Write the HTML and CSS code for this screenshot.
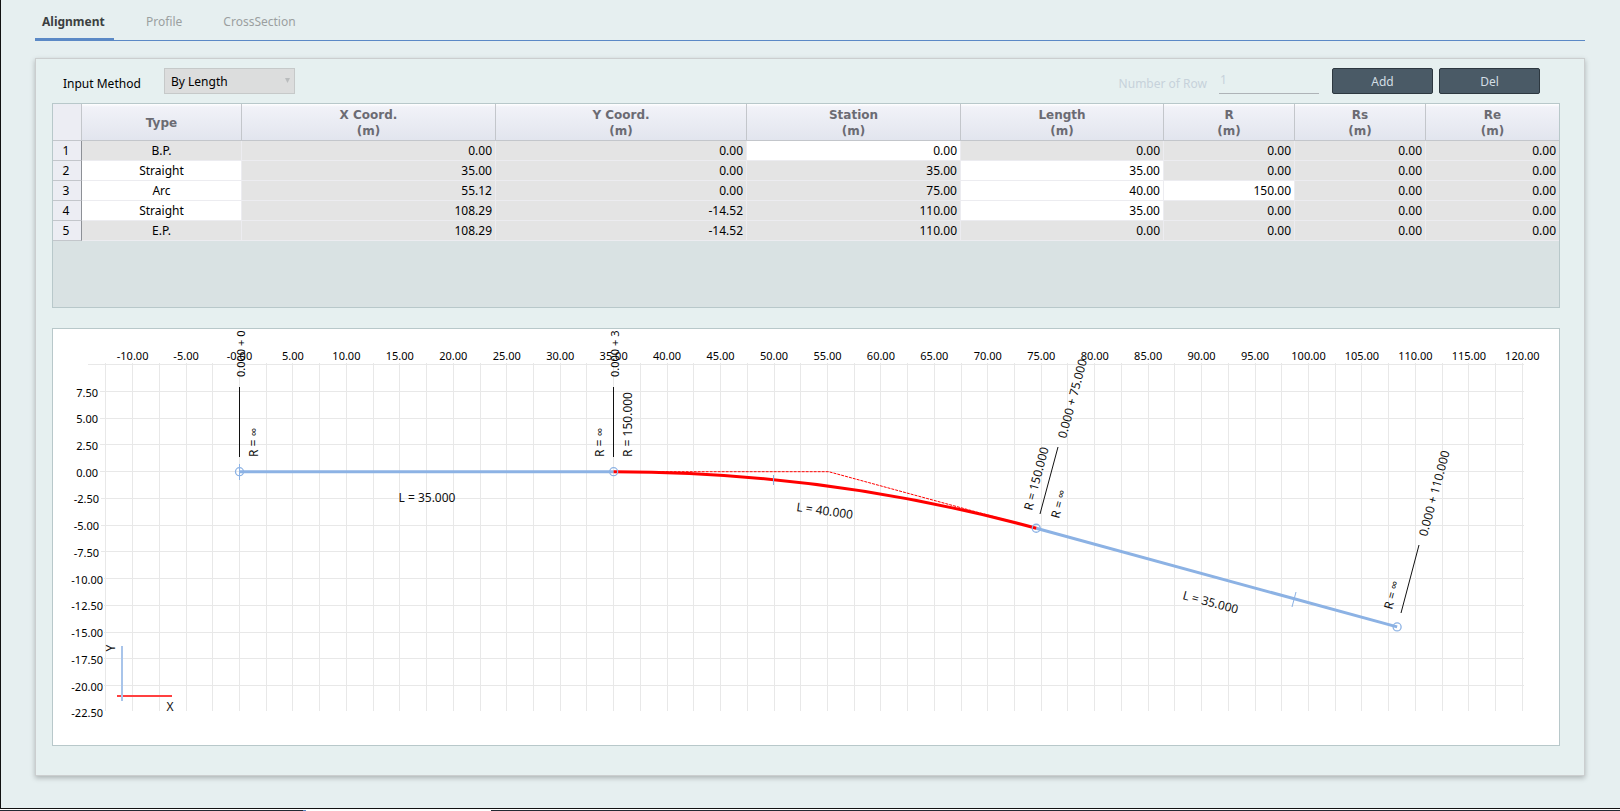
FILE: index.html
```html
<!DOCTYPE html>
<html lang="en">
<head>
<meta charset="utf-8">
<title>Alignment</title>
<link rel="stylesheet" href="styles.css">
</head>
<body>
<div class="window">
  <nav class="tabs">
    <button class="tab tab-active" type="button">Alignment</button>
    <button class="tab" type="button">Profile</button>
    <button class="tab" type="button">CrossSection</button>
  </nav>
  <main class="panel">
    <div class="toolbar">
      <label class="label label-method" for="method">Input Method</label>
      <div class="select-wrap">
        <select id="method" class="select"><option>By Length</option></select>
        <svg class="arrow" width="5" height="5" viewBox="0 0 5 5"><path d="M0 0H5L2.5 5Z" fill="#b9bcbd"/></svg>
      </div>
      <label class="label label-off" for="rows">Number of Row</label>
      <input id="rows" class="rows" type="text" value="1" disabled>
      <div class="actions">
        <button class="btn" type="button">Add</button>
        <button class="btn" type="button">Del</button>
      </div>
    </div>
    <div class="grid-box">
      <table class="grid">
        <colgroup><col class="c-num"><col class="c-type"><col class="c-x"><col class="c-y"><col class="c-sta"><col class="c-len"><col class="c-r"><col class="c-r"><col class="c-re"></colgroup>
        <thead>
          <tr><th class="corner"></th><th>Type</th><th>X Coord.<br>(m)</th><th>Y Coord.<br>(m)</th><th>Station<br>(m)</th><th>Length<br>(m)</th><th>R<br>(m)</th><th>Rs<br>(m)</th><th>Re<br>(m)</th></tr>
        </thead>
        <tbody>
          <tr><th scope="row">1</th><td class="type">B.P.</td><td>0.00</td><td>0.00</td><td class="edit">0.00</td><td>0.00</td><td>0.00</td><td>0.00</td><td>0.00</td></tr>
          <tr><th scope="row">2</th><td class="type edit">Straight</td><td>35.00</td><td>0.00</td><td>35.00</td><td class="edit">35.00</td><td>0.00</td><td>0.00</td><td>0.00</td></tr>
          <tr><th scope="row">3</th><td class="type edit">Arc</td><td>55.12</td><td>0.00</td><td>75.00</td><td class="edit">40.00</td><td class="edit">150.00</td><td>0.00</td><td>0.00</td></tr>
          <tr><th scope="row">4</th><td class="type edit">Straight</td><td>108.29</td><td>-14.52</td><td>110.00</td><td class="edit">35.00</td><td>0.00</td><td>0.00</td><td>0.00</td></tr>
          <tr><th scope="row">5</th><td class="type">E.P.</td><td>108.29</td><td>-14.52</td><td>110.00</td><td>0.00</td><td>0.00</td><td>0.00</td><td>0.00</td></tr>
        </tbody>
      </table>
    </div>
    <div class="chart-box">
      <svg class="chart" id="chart" viewBox="0 0 1506 416" role="img" aria-label="Alignment plan"></svg>
    </div>
  </main>
</div>
<div class="taskbar"></div>
<script src="chart.js"></script>
</body>
</html>
```
FILE: styles.css
```css
* { box-sizing: border-box; }
body {
  margin: 0;
  background: #e6eff0;
  font-family: "Noto Sans", "Open Sans", sans-serif;
  font-size: 12px;
  color: #000;
}
button, input, select { font: inherit; }
.window {
  border-left: 1px solid #111;
  border-bottom: 1px solid #111;
  padding: 0 35px 32px 34px;
}
.tabs {
  display: flex;
  gap: 23px;
  height: 41px;
  margin-bottom: 17px;
  border-bottom: 1px solid #5b89c6;
}
.tab {
  height: 41px;
  padding: 5px 9px 0;
  border: 0;
  border-bottom: 3px solid transparent;
  background: none;
  color: #9b9fa0;
}
.tab-active {
  min-width: 79px;
  padding: 5px 7px 0;
  border-bottom-color: #5b89c6;
  color: #3c3f41;
  font-weight: bold;
  text-align: left;
}
.panel {
  padding: 9px 24px 29px 16px;
  border: 1px solid #cbcecf;
  background: #e6f0f0;
  box-shadow: 0 2px 5px rgba(0, 0, 0, 0.25);
}
.toolbar {
  display: flex;
  align-items: center;
  height: 26px;
  margin-bottom: 9px;
  padding: 0 20px 0 11px;
}
.label { padding-top: 4px; }
.label-method { width: 101px; }
.label-off { margin-left: auto; color: #c6d2db; }
.select-wrap { position: relative; width: 131px; }
.select {
  display: block;
  width: 100%;
  height: 26px;
  padding: 0 6px;
  border: 1px solid #c6c9c9;
  border-radius: 0;
  background: #dcdddd;
  color: #000;
  appearance: none;
}
.arrow { position: absolute; right: 5px; top: 10px; }
.rows {
  width: 100px;
  height: 26px;
  margin: 0 13px 0 12px;
  padding: 0 1px 2px;
  border: 0;
  border-bottom: 1px solid #aeb3b7;
  background: none;
  color: #c6d2db;
}
.actions { display: flex; gap: 6px; }
.btn {
  width: 101px;
  height: 26px;
  padding: 0;
  border: 1px solid #2d3840;
  border-radius: 2px;
  background: #4a5a66;
  color: #d3dee4;
}
.grid-box {
  min-height: 205px;
  border: 1px solid #b8c8ca;
  background: #d9e2e3;
}
.grid {
  width: 100%;
  border-collapse: separate;
  border-spacing: 0;
  table-layout: fixed;
  line-height: 16px;
}
.c-num { width: 29px; }
.c-type { width: 160px; }
.c-x { width: 254px; }
.c-y { width: 251px; }
.c-sta { width: 214px; }
.c-len { width: 203px; }
.c-r { width: 131px; }
.c-re { width: 133px; }
thead th {
  height: 37px;
  padding: 3px 0 1px;
  border-right: 1px solid #c3c6cb;
  border-bottom: 1px solid #c3c6cb;
  background: linear-gradient(#fff 0, #f1f2f8 3px, #e2e5ee 100%);
  color: #6b6b73;
  font-family: "DejaVu Sans", sans-serif;
}
thead .corner { background: #ecedf3; }
thead th:last-child, td:last-child { border-right: 0; }
tbody th {
  height: 20px;
  padding: 0 2px 0 0;
  border-right: 1px solid #8d9096;
  border-bottom: 1px solid #c3c6cb;
  background: #ecedf3;
  font-weight: normal;
}
td {
  height: 20px;
  padding: 0 3px;
  border-right: 1px solid #ececf0;
  border-bottom: 1px solid #ececf0;
  background: #e4e4e4;
  text-align: right;
}
td.type { text-align: center; }
td.edit { background: #fff; }
.chart-box {
  margin-top: 20px;
  border: 1px solid #b8c8ca;
  background: #fff;
}
.chart {
  display: block;
  width: 100%;
  height: auto;
  font-size: 12px;
}
.chart text { fill: #111; }
.chart .caption { font-size: 11px; fill: #000; }
.mesh { stroke: #e8e8e8; stroke-width: 1; fill: none; }
.tangent { stroke: #8cb2e4; stroke-width: 3; fill: none; }
.tick { stroke: #8cb2e4; stroke-width: 1; fill: none; }
.node { stroke: #8cb2e4; stroke-width: 1.3; fill: none; }
.arc { stroke: #f00; stroke-width: 3; fill: none; }
.guide { stroke: #f00; stroke-width: 1; stroke-dasharray: 3 1; fill: none; }
.leader { stroke: #111; stroke-width: 1; }
.axis-x { stroke: #ff4040; stroke-width: 2; }
.axis-y { stroke: #a8c4ea; stroke-width: 2; }
.taskbar {
  height: 2px;
  border-top: 1px solid #fff;
  background: linear-gradient(90deg, #222a33 303px, #5b89c6 303px 306px, #fff 306px 491px, #222a33 491px);
}
```
FILE: chart.js
```js
const svg = document.getElementById("chart");
const NS = "http://www.w3.org/2000/svg";
const scale = 10.69;
const originX = 186.5;
const originY = 142.7;
const px = (x) => originX + x * scale;
const py = (y) => originY - y * scale;

function add(name, attrs, text) {
  const el = document.createElementNS(NS, name);
  for (const key in attrs) el.setAttribute(key, attrs[key]);
  if (text !== undefined) el.textContent = text;
  svg.appendChild(el);
  return el;
}
function line(cls, x1, y1, x2, y2) {
  add("line", { class: cls, x1, y1, x2, y2 });
}
function label(text, x, y, angle, anchor, cls) {
  add("text", {
    class: cls || "note",
    transform: `translate(${x} ${y}) rotate(${angle || 0})`,
    "text-anchor": anchor || "start"
  }, text);
}

// Mesh every 2.5 m
for (let x = -12.5; x <= 120; x += 2.5) {
  const gx = Math.floor(px(x)) + 0.5;
  line("mesh", gx, 34, gx, 382);
}
for (let y = 10; y >= -20; y -= 2.5) {
  const gy = Math.floor(py(y)) + 0.5;
  line("mesh", y === 10 ? 35 : y > -2 ? 47 : y > -9 ? 48 : 51, gy, 1471, gy);
}

// Axis captions
for (let x = -10; x <= 120; x += 5) {
  label((x === 0 ? "-" : "") + x.toFixed(2), px(x), 31, 0, "middle", "caption");
}
for (let y = 7.5; y >= -22.5; y -= 2.5) {
  label(y.toFixed(2), y >= 0 ? 45 : y > -9 ? 46 : 50, py(y) + 5, 0, "end", "caption");
}

// Axis marker
line("axis-x", 64, 367, 119, 367);
line("axis-y", 69, 317, 69, 372);
label("X", 117, 382, 0, "middle");
label("Y", 62, 319, -90, "middle");

// Alignment elements
const x1 = px(35), x2 = px(74.53), y2 = py(-5.29), x3 = px(108.29), y3 = py(-14.52);
add("path", { class: "guide", d: `M${x1} ${originY}H${px(55.12)}L${x2} ${y2}` });
line("tangent", originX, originY, x1, originY);
line("tangent", x2, y2, x3, y3);
add("path", { class: "arc", d: `M${x1} ${originY}A${150 * scale} ${150 * scale} 0 0 1 ${x2} ${y2}` });
line("tick", 186.5, 135, 186.5, 151);
line("tick", 720.5, 146, 720.5, 156);
line("tick", 1243, 263, 1239, 278);
for (const [cx, cy] of [[originX, originY], [x1, originY], [x2, y2], [x3, y3]]) {
  add("circle", { class: "node", cx, cy, r: 4 });
}

// Leaders and labels
line("leader", 186.5, 58, 186.5, 128);
line("leader", 560.5, 58, 560.5, 128);
line("leader", 987, 185, 1005, 118);
line("leader", 1348, 284, 1366, 216);
label("0.000 + 0", 192, 48, -90, "start", "caption");
label("0.000 + 3", 566, 48, -90, "start", "caption");
label("R = ∞", 205, 128, -90);
label("R = ∞", 551, 128, -90);
label("R = 150.000", 579, 128, -90);
label("L = 35.000", 374, 173, 0, "middle");
label("L = 40.000", 743, 182, 8);
label("L = 35.000", 1129, 270, 15);
label("R = 150.000", 979, 182, -75);
label("R = ∞", 1006, 190, -75);
label("0.000 + 75.000", 1013, 110, -75);
label("R = ∞", 1339, 281, -75);
label("0.000 + 110.000", 1374, 208, -75);
```
